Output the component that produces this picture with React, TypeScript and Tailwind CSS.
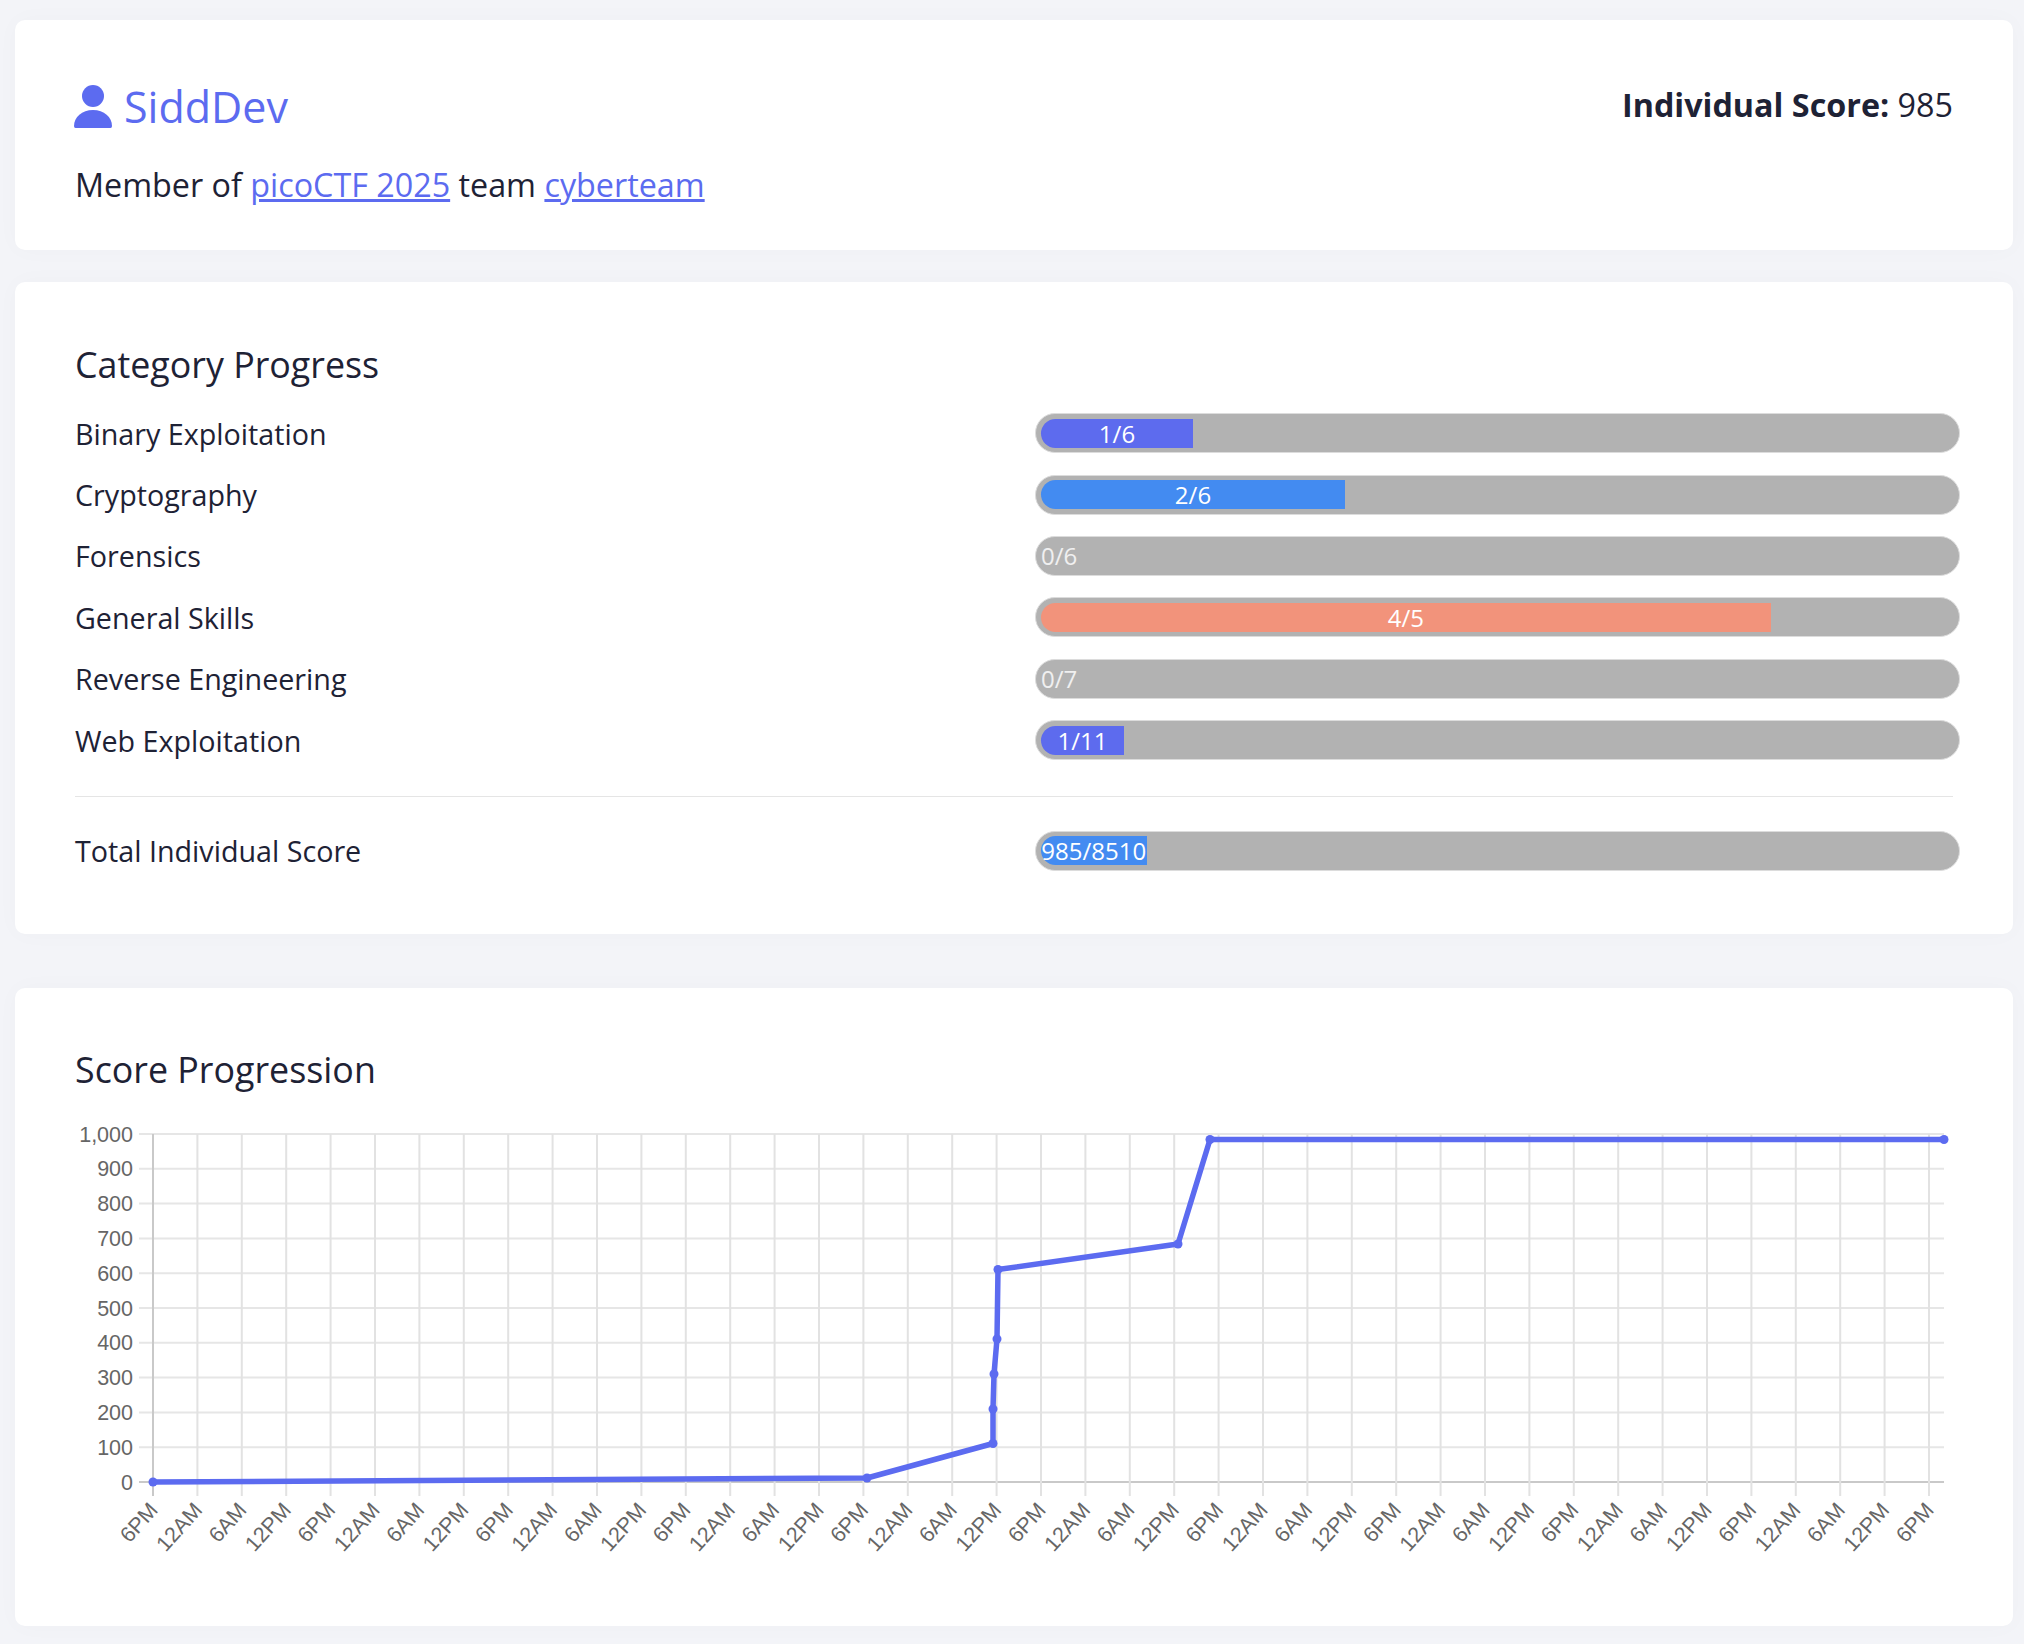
const primary = "#5c6bf0";

const categories = [
  { name: "Binary Exploitation", solved: 1, total: 6, color: "bg-[#5d6bee]" },
  { name: "Cryptography", solved: 2, total: 6, color: "bg-[#438bf1]" },
  { name: "Forensics", solved: 0, total: 6, color: "bg-[#5d6bee]" },
  { name: "General Skills", solved: 4, total: 5, color: "bg-[#f2937b]" },
  { name: "Reverse Engineering", solved: 0, total: 7, color: "bg-[#5d6bee]" },
  { name: "Web Exploitation", solved: 1, total: 11, color: "bg-[#5d6bee]" },
];

const xLabels = ["6PM", "12AM", "6AM", "12PM"];

// chart coords are relative to the svg, which sits at x=75, y=1120 on the page
const plot = { left: 78, right: 1869, top: 14, bottom: 362 };
const points = [
  [78, 362],
  [792, 358],
  [918, 323.5],
  [918, 289],
  [919, 254],
  [922, 219],
  [923, 149.5],
  [1103, 124],
  [1135, 19.5],
  [1869, 19.5],
];

const Bar = ({ solved, total, color, label }: { solved: number; total: number; color: string; label: string }) => (
  <div className="flex h-[40px] w-[925px] items-center rounded-full border border-[#dcdcdc] bg-[#b2b2b2] pr-[6px] pl-[5px]">
    {solved === 0 ? (
      <span className="text-[24px] leading-none text-white/80">{label}</span>
    ) : (
      <div
        className={`flex h-[29px] items-center justify-center rounded-l-full pt-px whitespace-nowrap text-[24px] leading-none text-white ${color}`}
        style={{ width: `${(solved / total) * 100}%` }}
      >
        {label}
      </div>
    )}
  </div>
);

const ScoreChart = () => (
  <svg width="1878" height="450" viewBox="0 0 1878 450" className="block">
    {Array.from({ length: 11 }, (_, i) => {
      const y = plot.top + ((plot.bottom - plot.top) * i) / 10;
      return (
        <g key={i}>
          <line x1={64} x2={plot.right} y1={y} y2={y} stroke={i === 10 ? "#c9c9c9" : "#e6e6e6"} strokeWidth="2" />
          <text x={58} y={y + 7.5} textAnchor="end" fontSize="21.5" fill="#666">
            {i === 0 ? "1,000" : (10 - i) * 100}
          </text>
        </g>
      );
    })}
    {Array.from({ length: 41 }, (_, i) => {
      const x = plot.left + 44.4 * i;
      return (
        <g key={i}>
          <line x1={x} x2={x} y1={plot.top} y2={376} stroke={i === 0 ? "#c9c9c9" : "#e2e2e2"} strokeWidth="2" />
          <text
            x={x + 6}
            y={391}
            textAnchor="end"
            fontSize="21.5"
            fill="#666"
            transform={`rotate(-48 ${x + 6} 391)`}
          >
            {xLabels[i % 4]}
          </text>
        </g>
      );
    })}
    <polyline
      points={points.map((p) => p.join(",")).join(" ")}
      fill="none"
      stroke={primary}
      strokeWidth="5.5"
      strokeLinejoin="round"
    />
    {points.map((p, i) => (
      <circle key={i} cx={p[0]} cy={p[1]} r="4.5" fill={primary} />
    ))}
  </svg>
);

const App = () => {
  return (
    <div className="min-h-[1644px] bg-[#f3f4f8] pt-[20px] pr-[11px] pl-[15px] font-['Open_Sans',sans-serif] text-[#1e2235]">
      <section className="mb-[32px] flex h-[230px] flex-col rounded-[10px] bg-white px-[60px] pt-[65px] shadow-[0_0_24px_rgba(30,34,80,0.025)]">
        <div className="flex h-[43px] items-start justify-between">
          <h1 className="-ml-[1px] flex items-center gap-[12px] text-[43px] leading-[43px] text-[#5c6bf0]">
            <svg width="38" height="43" viewBox="0 0 38 43" fill="currentColor">
              <circle cx="19" cy="11" r="11" />
              <path d="M1.5 43 Q0 43 0 41 C0 32 8 25 19 25 C30 25 38 32 38 41 Q38 43 36.5 43 Z" />
            </svg>
            SiddDev
          </h1>
          <div className="text-[32.3px] leading-[39px]">
            <span className="font-bold">Individual Score:</span> 985
          </div>
        </div>
        <p className="mt-[36px] text-[32.3px] leading-[40px]">
          Member of{" "}
          <a href="#" className="text-[#5c6bf0] underline">
            picoCTF 2025
          </a>{" "}
          team{" "}
          <a href="#" className="text-[#5c6bf0] underline">
            cyberteam
          </a>
        </p>
      </section>

      <section className="mb-[54px] h-[652px] rounded-[10px] bg-white px-[60px] pt-[60px] shadow-[0_0_24px_rgba(30,34,80,0.025)]">
        <h2 className="mb-[16.5px] text-[35.8px] leading-[44px]">Category Progress</h2>
        {categories.map((c) => (
          <div key={c.name} className="-mr-[7px] flex h-[61.4px] items-center justify-between text-[28.7px]">
            <span>{c.name}</span>
            <Bar solved={c.solved} total={c.total} color={c.color} label={`${c.solved}/${c.total}`} />
          </div>
        ))}
        <hr className="mt-[25px] mb-[23px] border-t border-[#e5e5e5]" />
        <div className="-mr-[7px] flex h-[61.4px] items-center justify-between text-[28.7px]">
          <span>Total Individual Score</span>
          <Bar solved={985} total={8510} color="bg-[#438bf1]" label="985/8510" />
        </div>
      </section>

      <section className="h-[638px] rounded-[10px] bg-white px-[60px] pt-[59px] shadow-[0_0_24px_rgba(30,34,80,0.025)]">
        <h2 className="mb-[29px] text-[35.8px] leading-[44px]">Score Progression</h2>
        <div className="font-['Liberation_Sans',sans-serif]">
          <ScoreChart />
        </div>
      </section>
    </div>
  );
};

export default App;
